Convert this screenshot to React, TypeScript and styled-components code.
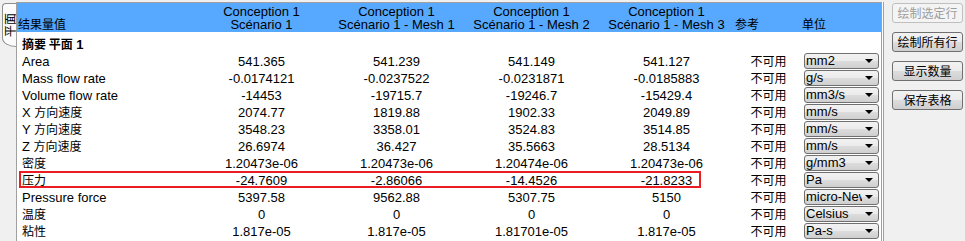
import React from "react";
import styled, { createGlobalStyle } from "styled-components";

const Global = createGlobalStyle`
  html, body { margin: 0; padding: 0; background: #f0f0f0; }
  body { font-family: "Liberation Sans", "Noto Sans CJK SC", sans-serif; font-size: 13px; color: #000; }
`;

const Page = styled.div`
  display: flex;
  width: 965px;
  height: 241px;
  overflow: hidden;
  background: #f0f0f0;
`;

const TabColumn = styled.div`
  width: 16px;
  flex: none;
  padding-top: 3px;
  padding-left: 2px;
  box-sizing: border-box;
`;

const Tab = styled.div`
  width: 14px;
  height: 44px;
  box-sizing: border-box;
  background: #fbfbfb;
  border: 1px solid #8e8f8f;
  border-right: none;
  border-radius: 4px 0 0 14px / 4px 0 0 9px;
  display: flex;
  align-items: flex-start;
  justify-content: center;
  padding-top: 9px;
`;

const TabLabel = styled.span`
  display: block;
  font-family: "Noto Sans CJK SC", sans-serif;
  font-size: 12px;
  line-height: 12px;
  white-space: nowrap;
  writing-mode: vertical-rl;
  text-orientation: sideways;
  transform: rotate(180deg);
`;

const Frame = styled.div`
  width: 864px;
  flex: none;
  margin-top: 2px;
  border-top: 1px solid #a0a0a0;
  border-left: 1px solid #a0a0a0;
  border-right: 1px solid #a0a0a0;
  box-shadow: 1px 0 0 #ffffff, 2px 0 0 #a0a0a0;
  background: #ffffff;
  display: flex;
  flex-direction: column;
`;

const cols = "177px 135px 135px 135px 135px 67px 79px";

const HeaderRow = styled.div`
  display: grid;
  grid-template-columns: ${cols};
  height: 29px;
  background: #56a9ff;
  align-items: end;
  line-height: 13px;
`;

const HeadCell = styled.div<{ $align?: "left" | "center" }>`
  text-align: ${(p) => p.$align ?? "center"};
  padding-left: ${(p) => (p.$align === "left" ? "1px" : "0")};
  padding-bottom: 1px;
  white-space: nowrap;
`;

const Body = styled.div`
  padding-top: 3px;
  display: flex;
  flex-direction: column;
`;

const SummaryRow = styled.div`
  height: 17px;
  line-height: 17px;
  padding-left: 5px;
  font-weight: bold;
`;

const Row = styled.div`
  position: relative;
  display: grid;
  grid-template-columns: ${cols};
  height: 17px;
  line-height: 17px;
  align-items: center;
`;

const Label = styled.div`
  padding-left: 5px;
  white-space: nowrap;
`;

const Value = styled.div`
  text-align: center;
  white-space: nowrap;
`;

const RefCell = styled.div`
  text-align: center;
  padding-left: 2px;
`;

const Highlight = styled.div`
  position: absolute;
  left: 2px;
  top: 0;
  width: 682px;
  height: 17px;
  box-sizing: border-box;
  border: 2px solid #ec1c24;
  pointer-events: none;
`;

const Select = styled.div`
  margin-left: 3px;
  width: 75px;
  height: 16px;
  box-sizing: border-box;
  border: 1px solid #707070;
  border-radius: 3px;
  background: linear-gradient(#f2f2f2 0%, #ebebeb 50%, #dddddd 50%, #cfcfcf 100%);
  display: flex;
  align-items: center;
  overflow: hidden;
`;

const SelectText = styled.span`
  flex: 1;
  padding-left: 1px;
  line-height: 14px;
  overflow: hidden;
  white-space: nowrap;
  max-width: 57px;
`;

const Arrow = styled.span`
  width: 0;
  height: 0;
  margin: 0 5px 0 3px;
  border-left: 4px solid transparent;
  border-right: 4px solid transparent;
  border-top: 4px solid #000;
`;

const Side = styled.div`
  flex: 1;
  display: flex;
  flex-direction: column;
  gap: 9px;
  padding: 3px 0 0 10px;
`;

const Button = styled.button<{ $disabled?: boolean }>`
  width: 71px;
  height: 20px;
  padding: 0;
  box-sizing: border-box;
  font-family: "Noto Sans CJK SC", sans-serif;
  font-size: 12px;
  line-height: 18px;
  border-radius: 3px;
  border: 1px solid ${(p) => (p.$disabled ? "#bfbfbf" : "#707070")};
  color: ${(p) => (p.$disabled ? "#9d9d9d" : "#000")};
  background: ${(p) =>
    p.$disabled
      ? "#f4f4f4"
      : "linear-gradient(#f2f2f2 0%, #ebebeb 50%, #dddddd 50%, #cfcfcf 100%)"};
`;

const Zh = styled.span`
  font-family: "Noto Sans CJK SC", sans-serif;
  font-size: 12px;
`;

function T({ s }: { s: string }) {
  const parts = s.split(/([\u3400-\u9fff]+)/).filter((x) => x.length > 0);
  return (
    <>
      {parts.map((p, i) =>
        /[\u3400-\u9fff]/.test(p) ? <Zh key={i}>{p}</Zh> : <React.Fragment key={i}>{p}</React.Fragment>
      )}
    </>
  );
}

type RowData = { label: string; values: string[]; unit: string; hl?: boolean };

const rows: RowData[] = [
  { label: "Area", values: ["541.365", "541.239", "541.149", "541.127"], unit: "mm2" },
  { label: "Mass flow rate", values: ["-0.0174121", "-0.0237522", "-0.0231871", "-0.0185883"], unit: "g/s" },
  { label: "Volume flow rate", values: ["-14453", "-19715.7", "-19246.7", "-15429.4"], unit: "mm3/s" },
  { label: "X 方向速度", values: ["2074.77", "1819.88", "1902.33", "2049.89"], unit: "mm/s" },
  { label: "Y 方向速度", values: ["3548.23", "3358.01", "3524.83", "3514.85"], unit: "mm/s" },
  { label: "Z 方向速度", values: ["26.6974", "36.427", "35.5663", "28.5134"], unit: "mm/s" },
  { label: "密度", values: ["1.20473e-06", "1.20473e-06", "1.20474e-06", "1.20473e-06"], unit: "g/mm3" },
  { label: "压力", values: ["-24.7609", "-2.86066", "-14.4526", "-21.8233"], unit: "Pa", hl: true },
  { label: "Pressure force", values: ["5397.58", "9562.88", "5307.75", "5150"], unit: "micro-Newton" },
  { label: "温度", values: ["0", "0", "0", "0"], unit: "Celsius" },
  { label: "粘性", values: ["1.817e-05", "1.817e-05", "1.81701e-05", "1.817e-05"], unit: "Pa-s" },
];

const heads = ["Scénario 1", "Scénario 1 - Mesh 1", "Scénario 1 - Mesh 2", "Scénario 1 - Mesh 3"];

export default function App() {
  return (
    <Page>
      <Global />
      <TabColumn>
        <Tab>
          <TabLabel>平面</TabLabel>
        </Tab>
      </TabColumn>
      <Frame>
        <HeaderRow>
          <HeadCell $align="left">
            <Zh>结果量值</Zh>
          </HeadCell>
          {heads.map((h) => (
            <HeadCell key={h}>
              Conception 1
              <br />
              {h}
            </HeadCell>
          ))}
          <HeadCell $align="left">
            <Zh>参考</Zh>
          </HeadCell>
          <HeadCell $align="left">
            <Zh>单位</Zh>
          </HeadCell>
        </HeaderRow>
        <Body>
          <SummaryRow>
            <Zh>摘要 平面</Zh> 1
          </SummaryRow>
          {rows.map((r) => (
            <Row key={r.label}>
              <Label>
                <T s={r.label} />
              </Label>
              {r.values.map((v, i) => (
                <Value key={i}>{v}</Value>
              ))}
              <RefCell>
                <Zh>不可用</Zh>
              </RefCell>
              <Select>
                <SelectText>{r.unit}</SelectText>
                <Arrow />
              </Select>
              {r.hl && <Highlight />}
            </Row>
          ))}
        </Body>
      </Frame>
      <Side>
        <Button $disabled>绘制选定行</Button>
        <Button>绘制所有行</Button>
        <Button>显示数量</Button>
        <Button>保存表格</Button>
      </Side>
    </Page>
  );
}
